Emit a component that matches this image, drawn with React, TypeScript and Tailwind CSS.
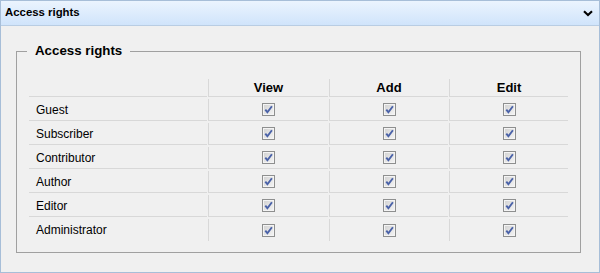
import React from 'react';

const roles = ['Guest', 'Subscriber', 'Contributor', 'Author', 'Editor', 'Administrator'];
const perms = ['View', 'Add', 'Edit'];

function Check() {
  return (
    <svg width="13" height="13" viewBox="0 0 13 13">
      <defs>
        <linearGradient id="cbfill" x1="0" y1="0" x2="1" y2="1">
          <stop offset="0" stopColor="#d4d4d4" />
          <stop offset="1" stopColor="#f2f2f2" />
        </linearGradient>
      </defs>
      <rect x="0.5" y="0.5" width="12" height="12" fill="#f4f4f4" stroke="#8e8f8f" />
      <rect x="2" y="2" width="9" height="9" fill="url(#cbfill)" />
      <path d="M3.3 6.6 L5.4 9.2 L9.9 3.2" fill="none" stroke="#4a62a8" strokeWidth="1.9" />
    </svg>
  );
}

export default function App() {
  return (
    <div className="w-[600px] h-[273px] border border-[#a7bed8] bg-[#f0f0f0] font-['Liberation_Sans',Arial,sans-serif] text-black overflow-hidden">
      {/* Panel header */}
      <div className="h-[25px] flex items-center justify-between pl-[4px] pr-[6px] border-b border-[#b9cde3] bg-gradient-to-b from-[#ebf4fe] to-[#d0e4fb]">
        <span className="text-[11.4px] font-bold leading-none">Access rights</span>
        <svg width="10" height="7" viewBox="0 0 10 7">
          <path d="M1 1.2 L5 5 L9 1.2" fill="none" stroke="#000" strokeWidth="2.1" />
        </svg>
      </div>

      <fieldset className="ml-[15px] mt-[17px] w-[565px] h-[210px] border border-[#a0a0a0] px-[12px] pt-[20px]">
        <legend className="ml-[-2px] px-[8px] text-[13.3px] font-bold leading-[16px]">Access rights</legend>

        <div className="grid grid-cols-[178px_120px_119px_119px] gap-x-[1px] gap-y-[2px] text-[12px]">
          <div className="h-[18px] border-b border-[#d8d8d8]" />
          {perms.map((p) => (
            <div
              key={p}
              className="h-[18px] border-b border-l border-[#d8d8d8] flex items-center justify-center text-[13px] font-bold"
            >
              {p}
            </div>
          ))}

          {roles.map((role, i) => {
            const last = i === roles.length - 1;
            return (
              <React.Fragment key={role}>
                <div
                  className={`h-[22px] pl-[7px] flex items-center ${
                    last ? '' : 'border-b border-[#d8d8d8]'
                  }`}
                >
                  {role}
                </div>
                {perms.map((p) => (
                  <div
                    key={p}
                    className={`h-[22px] border-l border-[#d8d8d8] flex items-center justify-center ${
                      last ? '' : 'border-b'
                    }`}
                  >
                    <Check />
                  </div>
                ))}
              </React.Fragment>
            );
          })}
        </div>
      </fieldset>
    </div>
  );
}
